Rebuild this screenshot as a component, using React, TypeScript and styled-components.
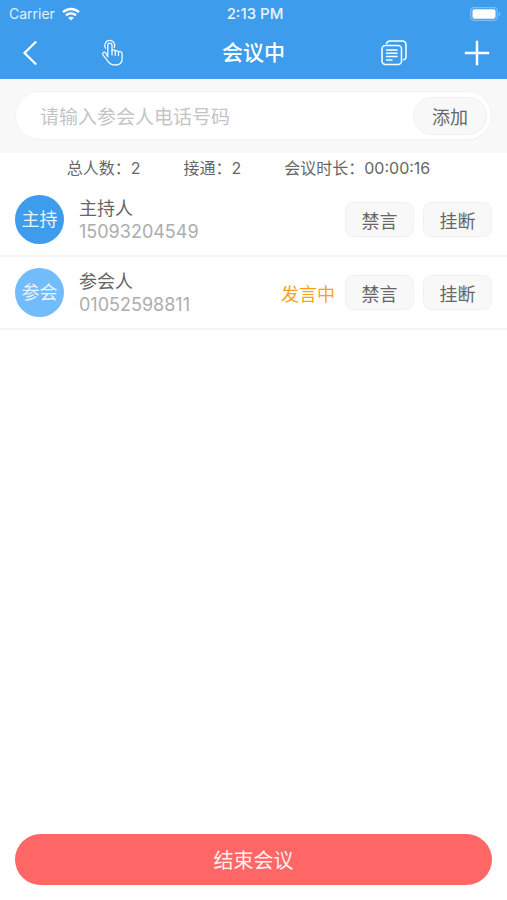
import React, { useState } from "react";
import styled, { createGlobalStyle } from "styled-components";

const GlobalStyle = createGlobalStyle`
  *, *::before, *::after { box-sizing: border-box; }
  body {
    margin: 0;
    background: #fff;
    color: #666;
    font-family: Inter, "Noto Sans CJK SC", sans-serif;
  }
  button, input { font: inherit; color: inherit; }
  h1, p { margin: 0; font-weight: 400; }
`;

const Page = styled.div`
  display: flex;
  flex-direction: column;
  min-height: 100vh;
`;

const Header = styled.header`
  background: #3e9cec;
  color: #fff;
`;

const StatusBar = styled.div`
  display: grid;
  grid-template-columns: 1fr auto 1fr;
  align-items: center;
  height: 27px;
  padding: 0 6px 0 9px;
  font-size: 14px;
  line-height: 20px;
`;

const Carrier = styled.div`
  display: flex;
  align-items: center;
  gap: 7px;
  color: #e2f1fe;
`;

const Clock = styled.time`
  font-size: 15px;
  font-weight: 500;
  color: #e8f4ff;
`;

const BatterySlot = styled.div`
  display: flex;
  justify-content: flex-end;
`;

const NavBar = styled.nav`
  display: grid;
  grid-template-columns: 1fr auto 1fr;
  align-items: center;
  height: 52px;
`;

const NavGroup = styled.div<{ $end?: boolean }>`
  display: flex;
  justify-content: ${(p) => (p.$end ? "flex-end" : "flex-start")};
  gap: 23px;
`;

const IconButton = styled.button`
  display: flex;
  align-items: center;
  justify-content: center;
  width: 60px;
  height: 48px;
  padding: 0;
  border: 0;
  background: none;
  cursor: pointer;
`;

const Title = styled.h1`
  && { font-weight: 500; }
  font-size: 21px;
  line-height: 28px;
`;

const SearchArea = styled.form`
  padding: 12px 15px 13px;
  background: #f8f8f8;
`;

const SearchPill = styled.div`
  display: flex;
  align-items: center;
  height: 49px;
  padding: 0 4px 0 24px;
  border: 1px solid #f3f3f3;
  border-radius: 25px;
  background: #fff;
`;

const PhoneInput = styled.input`
  && { font-family: "Noto Sans CJK SC", sans-serif; }
  flex: 1;
  min-width: 0;
  height: 100%;
  padding: 0;
  border: 0;
  outline: 0;
  background: none;
  font-size: 19px;
  &::placeholder { color: #c4c4c4; opacity: 1; }
`;

const AddButton = styled.button`
  width: 74px;
  height: 38px;
  padding: 0;
  border: 1px solid #f1f1f1;
  border-radius: 19px;
  background: #f8f8f8;
  font-size: 18px;
  cursor: pointer;
`;

const Stats = styled.div`
  display: flex;
  justify-content: center;
  gap: 43px;
  padding: 0 10px 1px 0;
  font-size: 16px;
  line-height: 30px;
  white-space: nowrap;
`;

const List = styled.ul`
  flex: 1;
  margin: 0;
  padding: 0;
  list-style: none;
`;

const Row = styled.li`
  display: flex;
  align-items: center;
  height: 73px;
  padding: 0 15px;
  border-bottom: 2px solid #f4f4f4;
`;

const Avatar = styled.div<{ $host?: boolean }>`
  flex: none;
  width: 49px;
  height: 49px;
  border-radius: 50%;
  background: ${(p) => (p.$host ? "#3e9cec" : "#72bcfb")};
  color: #e8f5ff;
  font-size: 18px;
  line-height: 50px;
  text-align: center;
`;

const Person = styled.div`
  flex: 1;
  min-width: 0;
  padding-left: 15px;
  line-height: 23px;
`;

const Name = styled.p`
  font-size: 18px;
`;

const Phone = styled.p`
  font-size: 18px;
  color: #adadad;
`;

const Speaking = styled.span`
  margin-right: 10px;
  color: #fba21c;
  font-size: 18px;
`;

const Actions = styled.div`
  display: flex;
  gap: 9px;
`;

const ActionButton = styled.button`
  width: 69px;
  height: 35px;
  padding: 0;
  border: 1px solid #f1f1f1;
  border-radius: 8px;
  background: #f8f8f8;
  font-size: 18px;
  cursor: pointer;
`;

const Footer = styled.footer`
  padding: 0 15px 15px;
`;

const EndButton = styled.button`
  display: block;
  width: 100%;
  height: 51px;
  border: 0;
  border-radius: 26px;
  background: #ff6666;
  && { color: #fff0ee; }
  font-size: 20px;
  cursor: pointer;
`;

const WifiIcon = () => (
  <svg width="18" height="14" viewBox="0 0 18 14" fill="none" stroke="#fff" strokeWidth="2.4" aria-hidden="true">
    <path d="M1 5.2C5.4.9 12.6.9 17 5.2" />
    <path d="M4 8.4c2.8-2.7 7.2-2.7 10 0" />
    <path d="M9 13.6 6.2 10.8c1.5-1.4 4.1-1.4 5.6 0Z" fill="#fff" stroke="none" />
  </svg>
);

const BatteryIcon = () => (
  <svg width="31" height="14" viewBox="0 0 31 14" aria-hidden="true">
    <rect x="0.7" y="0.7" width="26.6" height="12.6" rx="3.6" fill="none" stroke="#7fbdf3" strokeWidth="1.2" />
    <rect x="2.5" y="2.3" width="23" height="9.4" rx="2" fill="#fff" />
    <path d="M28.8 4.8c2.2.7 2.2 3.7 0 4.4Z" fill="#7fbdf3" />
  </svg>
);

const BackIcon = () => (
  <svg width="16" height="26" viewBox="0 0 16 26" fill="none" stroke="#fff" strokeWidth="2.2" aria-hidden="true">
    <path d="M14.2 1.5 2.5 13l11.7 11.5" />
  </svg>
);

const TapIcon = () => (
  <svg width="24" height="28" viewBox="0 0 24 28" fill="none" stroke="#f2f9ff" strokeWidth="1.3" strokeLinecap="round" strokeLinejoin="round" aria-hidden="true">
    <path d="M4.5 9.1a5 5 0 1 1 8.8-.6" />
    <path d="M6.8 17.7V6.3a2.1 2.1 0 0 1 4.2 0v5.5c.5-1.5 3-1.2 3.3.5.6-1 2.9-.7 3.2.8.8-.9 3.6-.6 3.6 1.6v5.4c0 3.9-2.9 5.9-6.9 5.9-3.8 0-5.7-1.5-7.2-3.7l-5-6.5c-1.3-1.9 1-3.4 2.6-2.1Z" />
    <path d="M11 11.8v4.1M14.3 12.3v4M17.5 13.1v3.5" />
  </svg>
);

const DocumentsIcon = () => (
  <svg width="26" height="26" viewBox="0 0 26 26" fill="none" stroke="#fff" strokeWidth="1.5" strokeLinecap="round" strokeLinejoin="round" aria-hidden="true">
    <rect x="1" y="5.5" width="19.5" height="19" rx="3.5" />
    <path d="M5.5 3.6C6 1.8 7.2 1 9 1h12.2C23.6 1 25 2.4 25 4.8v11.4c0 2.1-.7 3.2-2.2 3.6" />
    <path d="M5.5 10h10.5M5.5 13.3h10.5M5.5 16.6h10.5M5.5 19.9h5.5" />
  </svg>
);

const PlusIcon = () => (
  <svg width="26" height="26" viewBox="0 0 26 26" fill="none" stroke="#fff" strokeWidth="2.5" aria-hidden="true">
    <path d="M13 .8v24.4M.8 13h24.4" />
  </svg>
);

const participants = [
  { badge: "主持", name: "主持人", phone: "15093204549", host: true, speaking: false },
  { badge: "参会", name: "参会人", phone: "01052598811", host: false, speaking: true },
];

export default function App() {
  const [phone, setPhone] = useState("");

  return (
    <Page>
      <GlobalStyle />
      <Header>
        <StatusBar>
          <Carrier>
            <span>Carrier</span>
            <WifiIcon />
          </Carrier>
          <Clock>2:13 PM</Clock>
          <BatterySlot>
            <BatteryIcon />
          </BatterySlot>
        </StatusBar>
        <NavBar>
          <NavGroup>
            <IconButton type="button" aria-label="返回"><BackIcon /></IconButton>
            <IconButton type="button" aria-label="举手"><TapIcon /></IconButton>
          </NavGroup>
          <Title>会议中</Title>
          <NavGroup $end>
            <IconButton type="button" aria-label="会议记录"><DocumentsIcon /></IconButton>
            <IconButton type="button" aria-label="新增"><PlusIcon /></IconButton>
          </NavGroup>
        </NavBar>
      </Header>
      <SearchArea onSubmit={(e: React.FormEvent) => e.preventDefault()}>
        <SearchPill>
          <PhoneInput
            type="tel"
            aria-label="参会人电话号码"
            placeholder="请输入参会人电话号码"
            value={phone}
            onChange={(e: React.ChangeEvent<HTMLInputElement>) => setPhone(e.target.value)}
          />
          <AddButton type="submit">添加</AddButton>
        </SearchPill>
      </SearchArea>
      <Stats>
        <span>总人数：2</span>
        <span>接通：2</span>
        <span>会议时长：00:00:16</span>
      </Stats>
      <List>
        {participants.map((p) => (
          <Row key={p.phone}>
            <Avatar $host={p.host}>{p.badge}</Avatar>
            <Person>
              <Name>{p.name}</Name>
              <Phone>{p.phone}</Phone>
            </Person>
            {p.speaking && <Speaking>发言中</Speaking>}
            <Actions>
              <ActionButton type="button">禁言</ActionButton>
              <ActionButton type="button">挂断</ActionButton>
            </Actions>
          </Row>
        ))}
      </List>
      <Footer>
        <EndButton type="button">结束会议</EndButton>
      </Footer>
    </Page>
  );
}
